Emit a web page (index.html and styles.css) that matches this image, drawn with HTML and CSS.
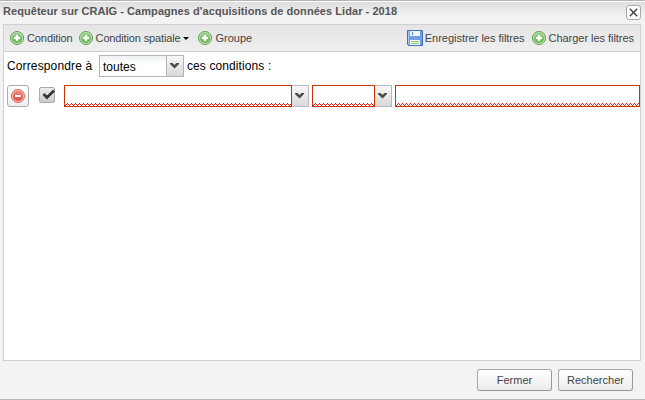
FILE: index.html
```html
<!DOCTYPE html>
<html lang="fr">
<head>
<meta charset="UTF-8">
<title>Requêteur</title>
<link rel="stylesheet" href="styles.css">
</head>
<body>

<svg class="defs" width="0" height="0">
  <defs>
    <linearGradient id="green" x1="0" y1="0" x2="0" y2="1">
      <stop offset="0" stop-color="#94cc86"/>
      <stop offset="1" stop-color="#58b043"/>
    </linearGradient>
    <linearGradient id="red" x1="0" y1="0" x2="0" y2="1">
      <stop offset="0" stop-color="#f08a7c"/>
      <stop offset="1" stop-color="#e2493c"/>
    </linearGradient>
    <symbol id="add" viewBox="0 0 16 16">
      <circle cx="8" cy="8" r="6.500" fill="#c5e3bb" stroke="#5a9e4d"/>
      <circle cx="8" cy="8" r="5.100" fill="url(#green)"/>
      <path d="M7 5h2v2h2v2H9v2H7V9H5V7h2z" fill="#fff" stroke="#fff" stroke-width=".4"/>
    </symbol>
    <symbol id="delete" viewBox="0 0 16 16">
      <circle cx="8" cy="8" r="6.500" fill="#f5b9b1" stroke="#d9655a"/>
      <circle cx="8" cy="8" r="5.100" fill="url(#red)"/>
      <path d="M5 7h6v2H5z" fill="#fff"/>
    </symbol>
    <symbol id="disk" viewBox="0 0 16 16">
      <path d="M.5.5h15v15h-14l-1-1z" fill="#6f9fe2" stroke="#3f6fbb"/>
      <path d="M1.500 1v13" stroke="#a5c6f2"/>
      <path d="M3 1h10v5H3z" fill="#eef4fc"/>
      <path d="M5 2h1v3H5z" fill="#5584cd"/>
      <path d="M3 10h10v5H3z" fill="#fff"/>
      <path d="M4 11h8v1H4zM4 13h8v1H4z" fill="#86c46b"/>
    </symbol>
    <symbol id="arrow" viewBox="0 0 9 6">
      <path d="M0 0h2.500l2 2 2-2H9v1L4.500 5.500 0 1z" fill="#4a4a4a"/>
    </symbol>
    <pattern id="wave" width="4" height="3" patternUnits="userSpaceOnUse">
      <path d="M0 2h1v1H0zM1 1h1v1H1zM2 0h1v1H2zM3 1h1v1H3z" fill="#dc1e14"/>
    </pattern>
  </defs>
</svg>

<div class="window">
  <div class="header">
    <span class="title">Requêteur sur CRAIG - Campagnes d'acquisitions de données Lidar - 2018</span>
    <span class="close"><svg width="9" height="9" viewBox="0 0 9 9"><path d="M.8.8l7.400 7.400M8.200.8L.8 8.200" stroke="#444" stroke-width="1.500"/></svg></span>
  </div>

  <div class="panel">
    <div class="toolbar">
      <span class="tool condition"><svg class="icon"><use href="#add"/></svg>Condition</span>
      <span class="tool spatial"><svg class="icon"><use href="#add"/></svg>Condition spatiale<i class="caret"></i></span>
      <span class="tool group"><svg class="icon"><use href="#add"/></svg>Groupe</span>
      <span class="tool save"><svg class="icon"><use href="#disk"/></svg>Enregistrer les filtres</span>
      <span class="tool load"><svg class="icon"><use href="#add"/></svg>Charger les filtres</span>
    </div>

    <div class="match">
      <span class="before">Correspondre à</span>
      <div class="combo type"><span class="field">toutes</span><span class="trigger"><svg width="9" height="6"><use href="#arrow"/></svg></span></div>
      <span class="after">ces conditions :</span>
    </div>

    <div class="filter">
      <span class="remove"><svg class="icon"><use href="#delete"/></svg></span>
      <span class="check"><svg width="13" height="11" viewBox="0 0 13 11"><path d="M1.500 5l3.500 3.500L12 1.500" fill="none" stroke="#383838" stroke-width="2.800"/></svg></span>
      <div class="combo attribute"><span class="field invalid"><svg class="wave"><rect width="100%" height="3" fill="url(#wave)"/></svg></span><span class="trigger"><svg width="9" height="6"><use href="#arrow"/></svg></span></div>
      <div class="combo operator"><span class="field invalid"><svg class="wave"><rect width="100%" height="3" fill="url(#wave)"/></svg></span><span class="trigger"><svg width="9" height="6"><use href="#arrow"/></svg></span></div>
      <span class="field invalid value"><svg class="wave"><rect width="100%" height="3" fill="url(#wave)"/></svg></span>
    </div>
  </div>

  <div class="footer">
    <span class="button">Fermer</span>
    <span class="button">Rechercher</span>
  </div>
</div>

</body>
</html>
```
FILE: styles.css
```css
* {
  box-sizing: border-box;
}
body {
  margin: 0;
  background: #b3aca2;
  font-family: "Liberation Sans", Arial, sans-serif;
  font-size: 11px;
  color: #444;
}
svg {
  display: block;
  flex: none;
}
.defs {
  position: absolute;
}
.window {
  display: flex;
  flex-direction: column;
  height: 400px;
  background: #f3f3f3;
  border-top: 1px solid #b5b5b5;
  border-bottom: 1px solid #b5b5b5;
  border-radius: 2px 2px 0 0;
  white-space: nowrap;
}
.header {
  display: flex;
  justify-content: space-between;
  height: 23px;
  padding: 3px 4px 0 3px;
  border-top: 1px solid #fff;
  background: linear-gradient(#dedede, #f3f3f3 14px);
}
.title {
  font-weight: bold;
  line-height: 13px;
  letter-spacing: 0.057px;
  color: #555;
}
.close {
  display: flex;
  align-items: center;
  justify-content: center;
  width: 15px;
  height: 15px;
  border: 1px solid #aaa;
  border-radius: 3px;
  background: #fff;
}
.panel {
  height: 337px;
  margin: 0 4px 0 3px;
  border: 1px solid #d0d0d0;
  background: #fff;
}
.toolbar {
  display: flex;
  align-items: center;
  height: 27px;
  padding: 0 6px 0 5px;
  border-bottom: 1px solid #d0d0d0;
  background: linear-gradient(#e5e5e5, #efefef);
}
.tool {
  display: flex;
  align-items: center;
}
.icon {
  width: 16px;
  height: 16px;
}
.tool .icon {
  margin-right: 2px;
}
.condition {
  margin-right: 5px;
  letter-spacing: -0.1px;
}
.spatial {
  margin-right: 8px;
  letter-spacing: -0.14px;
}
.caret {
  margin-left: 2px;
  border: 3px solid transparent;
  border-top-color: #000;
  border-bottom: 0;
}
.group .icon {
  margin-right: 3px;
}
.save {
  margin-left: auto;
  letter-spacing: -0.02px;
}
.load {
  margin-left: 6px;
  letter-spacing: -0.04px;
}
.match {
  display: flex;
  align-items: center;
  height: 22px;
  margin-top: 3px;
  font-size: 12px;
  color: #000;
}
.before {
  width: 95px;
  padding-left: 3px;
  letter-spacing: 0.13px;
}
.after {
  margin-left: 3px;
  letter-spacing: 0.1px;
}
.combo {
  display: flex;
  height: 22px;
}
.field {
  flex: 1;
  height: 22px;
  padding: 0 3px;
  border: 1px solid #b5b8c8;
  background: linear-gradient(#eef2f2, #fff 8px);
  line-height: 22px;
}
.trigger {
  display: flex;
  width: 17px;
  padding: 7px 0 0 3px;
  border: 1px solid #b5b8c8;
  border-left: 0;
  background: linear-gradient(#f7f7f7, #d9d9d9);
}
.type {
  width: 85px;
}
.type .field,
.type .trigger {
  border-color: #b5b5b5;
}
.filter {
  display: flex;
  height: 22px;
  margin-top: 8px;
}
.remove {
  display: flex;
  align-items: center;
  justify-content: center;
  width: 22px;
  height: 22px;
  margin-left: 3px;
  border: 1px solid #aaa;
  border-radius: 3px;
  background: linear-gradient(#fff, #eee);
}
.check {
  display: flex;
  justify-content: center;
  width: 16px;
  height: 16px;
  padding: 1px 0 0 2px;
  margin: 2px 9px 0 10px;
  border: 1px solid #aaa;
  border-radius: 2px;
  background: linear-gradient(#eee, #ccc);
}
.invalid {
  display: flex;
  align-items: flex-end;
  padding: 0;
  border-color: #c30;
  background: #fff;
}
.wave {
  width: 100%;
  height: 3px;
}
.attribute {
  width: 245px;
}
.operator {
  width: 80px;
  margin: 0 3px;
}
.footer {
  display: flex;
  justify-content: flex-end;
  gap: 6px;
  padding: 8px 12px 0 0;
}
.button {
  width: 75px;
  height: 22px;
  border: 1px solid #aaa;
  border-right-color: #999;
  border-bottom-color: #999;
  border-radius: 3px;
  background: linear-gradient(#fff, #ececec);
  line-height: 20px;
  text-align: center;
}
```
